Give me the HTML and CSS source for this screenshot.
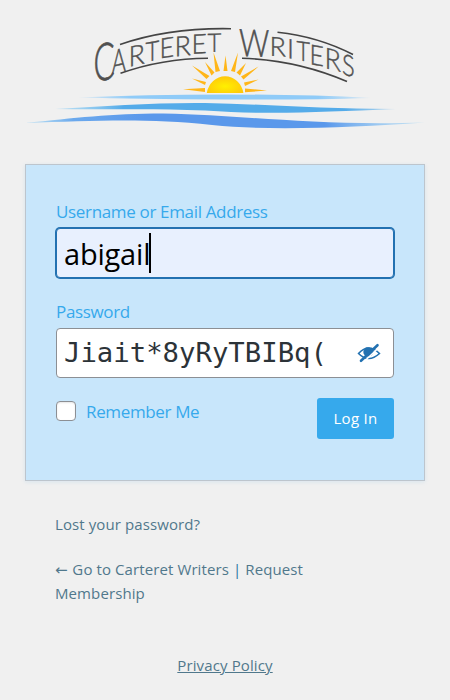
FILE: index.html
```html
<!DOCTYPE html>
<html lang="en">
<head>
<meta charset="utf-8">
<title>Log In - Carteret Writers</title>
<link rel="stylesheet" href="styles.css">
</head>
<body>
<main class="login">
  <svg class="logo" viewBox="25 0 400 132" role="img" aria-label="Carteret Writers">
    <defs>
      <radialGradient id="sun" cx=".5" cy=".6" r=".6"><stop stop-color="#fff000"/><stop offset="1" stop-color="#ffc60b"/></radialGradient>
      <linearGradient id="w1"><stop stop-color="#8fcbf8" stop-opacity=".2"/><stop offset=".18" stop-color="#8fcbf8"/><stop offset=".82" stop-color="#8fcbf8"/><stop offset="1" stop-color="#8fcbf8" stop-opacity=".2"/></linearGradient>
      <linearGradient id="w2"><stop stop-color="#8fd0f5" stop-opacity=".5"/><stop offset=".2" stop-color="#54abe9"/><stop offset=".85" stop-color="#54abe9"/><stop offset="1" stop-color="#54abe9" stop-opacity=".3"/></linearGradient>
      <linearGradient id="w3"><stop stop-color="#8fd0f5" stop-opacity=".5"/><stop offset=".12" stop-color="#6ba9ed"/><stop offset=".3" stop-color="#5a98eb"/><stop offset=".75" stop-color="#5a98eb"/><stop offset="1" stop-color="#8fd0f5" stop-opacity=".4"/></linearGradient>
    </defs>
    <g class="logo-text">
      <text transform="translate(93.500 82) skewY(-10) scale(1.16 1.92)">C</text>
      <text transform="translate(111.500 74.500) skewY(-14) scale(.82 1.24)">A</text>
      <text transform="translate(128.500 67) skewY(-12) scale(1 1.04)">R</text>
      <text transform="translate(145.500 62) skewY(-10) scale(.88 1)">T</text>
      <text transform="translate(159.500 58.500) skewY(-8) scale(.94 1.03)">E</text>
      <text transform="translate(174.500 56.500) skewY(-5) scale(1 1.02)">R</text>
      <text transform="translate(191.500 54) skewY(-4) scale(.98 1)">E</text>
      <text transform="translate(207.500 52) skewY(-2) scale(.88 .95)">T</text>
      <text transform="translate(239 56) skewY(2) scale(1.1 1.4)">W</text>
      <text transform="translate(269.500 55.500) skewY(4) scale(1 .98)">R</text>
      <text transform="translate(287 58) skewY(6) scale(1 1)">I</text>
      <text transform="translate(296.500 60) skewY(8) scale(.86 1)">T</text>
      <text transform="translate(309.500 64) skewY(10) scale(.92 1.03)">E</text>
      <text transform="translate(324.500 68) skewY(13) scale(1 1.08)">R</text>
      <text transform="translate(342 74) skewY(16) scale(.88 1.08)">S</text>
    </g>
    <path class="arc" d="M120 44.500Q169 27.500 231 28.700M120.500 73.300Q162 58.500 208 58.200M277.500 32.200Q318 36.500 353 54.500M242 58.200Q297 60 347 81.500"/>
    <g fill="#ffb619">
      <path d="M183 89.300 205 88 205 92ZM192 78.500 206 82 205 85ZM192 65.500 209.500 76 206.500 79ZM205 62 214.500 72.500 211.500 75.500ZM213.500 52.500 220 71 215.500 72ZM225.500 55.500 227.500 71 223.500 71ZM238 52.500 235 72 231 71ZM246 63 240 75.500 236.500 72.500ZM258.500 66.500 243.500 79.500 241 76.500ZM258.500 79.500 245 86 244 82.500ZM267 90.500 245 92.300 245 88.500Z"/>
    </g>
    <path fill="url(#sun)" d="M206.800 93A18.600 20.500 0 0 1 243.400 93Z"/>
    <path fill="url(#w1)" d="M78 97.500Q145 94.500 225 94.500T371 98Q310 100 225 99.500T78 97.500Z"/>
    <path fill="url(#w2)" d="M55 109C105 106 155 102.500 205 103C265 104 320 109 396 109C320 112 270 115 205 110.500C150 108 105 110 55 109Z"/>
    <path fill="url(#w3)" d="M25 123C75 118 110 113.500 163 113.500C245 115 310 126 425 122.500C350 127.500 270 131 212 125C145 118 95 121 25 123Z"/>
  </svg>
  <form class="card">
    <div class="label">Username or Email Address</div>
    <div class="field focused"><span class="user">abigail</span><i class="caret"></i></div>
    <div class="label second">Password</div>
    <div class="field"><span class="pass">Jiait*8yRyTBIBq(</span>
      <svg class="eye" viewBox="0 0 24 20"><path fill="none" stroke="currentColor" stroke-width="1.500" d="M1.500 10.500Q11.500-.5 22.500 10.500Q11.500 20.500 1.500 10.500Z"/><path fill="none" stroke="currentColor" stroke-width="1.200" d="M16 6Q17 11 11.500 13"/><circle cx="11" cy="9" r="4.700" fill="currentColor"/><path class="gap" d="M5.500 20 23 3.500"/><path d="M4 17.800 20.500 2.200" stroke="currentColor" stroke-width="2.600" stroke-linecap="round"/></svg>
    </div>
    <div class="actions">
      <span class="check"></span><span class="remember">Remember Me</span>
      <button type="button" class="submit">Log In</button>
    </div>
  </form>
  <nav class="links">
    <a class="lost">Lost your password?</a>
    <p class="back"><a><span class="arrow">←</span> Go to Carteret Writers</a> <span class="sep">|</span> <a>Request<br>Membership</a></p>
  </nav>
  <footer class="privacy"><a>Privacy Policy</a></footer>
</main>
</body>
</html>
```

FILE: styles.css
```css
* { box-sizing: border-box; }
body {
  margin: 0;
  background: #f0f0f0;
  font-family: "Open Sans", "Noto Sans", sans-serif;
}
.login { width: 400px; margin: 0 auto; }
.logo { display: block; width: 400px; height: 132px; overflow: visible; }
.logo-text { font-family: Lato, sans-serif; font-size: 27px; font-weight: 300; fill: #505050; stroke: #505050; stroke-width: .4; }
.arc { fill: none; stroke: #444; stroke-width: 1.6; }
.card {
  height: 317px;
  margin: 32px 0 0;
  padding: 34px 30px 0;
  border: 1px solid #bdc5cd;
  background: #c8e6fb;
  box-shadow: 0 1px 4px rgba(80, 170, 230, .15);
}
.label { height: 26px; line-height: 26px; font-size: 17px; letter-spacing: -.34px; color: #36a9ec; }
.label.second { margin-top: 21px; }
.field {
  display: flex;
  align-items: center;
  height: 50px;
  margin-top: 3px;
  padding: 0 7px;
  border: 1px solid #8c8f94;
  border-radius: 4px;
  background: #fff;
}
.field.focused {
  border-color: #2271b1;
  background: #e8f0fe;
  box-shadow: 0 0 0 1px #2271b1;
}
.user { font-size: 29px; letter-spacing: -.2px; color: #000; }
.caret { width: 2px; height: 40px; margin-left: -1px; background: #000; }
.pass { margin-top: -2px; font: 27.3px "DejaVu Sans Mono", monospace; color: #2c3338; }
.eye { width: 24px; height: 20px; margin-left: auto; margin-right: 5px; color: #2271b1; }
.gap { stroke: #fff; stroke-width: 1.5; }
.actions { display: flex; align-items: center; height: 41px; margin-top: 20px; }
.check {
  width: 20px;
  height: 20px;
  margin-top: -15px;
  border: 1px solid #8c8f94;
  border-radius: 4px;
  background: #fff;
  box-shadow: inset 0 1px 2px rgba(0, 0, 0, .1);
}
.remember { margin: -15px 0 0 10px; font-size: 17px; letter-spacing: -.36px; color: #36a9ec; }
.submit {
  width: 77px;
  height: 41px;
  margin-left: auto;
  padding: 0 0 2px;
  border: 0;
  border-radius: 3px;
  background: #36a9ec;
  color: #fff;
  font: 15px "Open Sans", sans-serif;
  letter-spacing: .3px;
}
.links { padding: 31px 30px 0; color: #50788c; font-size: 15px; line-height: 24px; letter-spacing: .1px; }
.lost { display: block; }
.back { margin: 21px 0 0; }
.arrow { font: 15px/1 "DejaVu Sans", sans-serif; letter-spacing: .8px; }
.sep { color: #2874a0; }
.privacy { margin-top: 48px; text-align: center; color: #50788c; font-size: 15px; line-height: 24px; letter-spacing: .12px; text-decoration: underline; }
```
